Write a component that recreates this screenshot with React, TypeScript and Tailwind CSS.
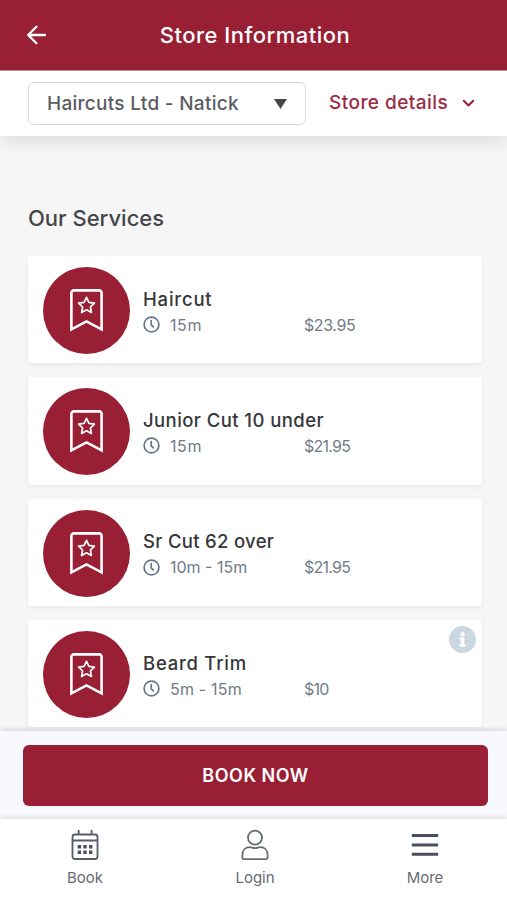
import type { ReactNode } from "react"
import { clsx } from "clsx"

type Service = {
  name: string
  nameClass: string
  duration: string
  durationClass: string
  price: string
  priceClass: string
  hasInfo?: boolean
}

const services: Service[] = [
  {
    name: "Haircut",
    nameClass: "tracking-[0.8px]",
    duration: "15m",
    durationClass: "tracking-[0.6px]",
    price: "$23.95",
    priceClass: "tracking-[-0.4px]",
  },
  {
    name: "Junior Cut 10 under",
    nameClass: "tracking-[0.42px]",
    duration: "15m",
    durationClass: "tracking-[0.6px]",
    price: "$21.95",
    priceClass: "tracking-[-0.75px]",
  },
  {
    name: "Sr Cut 62 over",
    nameClass: "tracking-[0.3px]",
    duration: "10m - 15m",
    durationClass: "",
    price: "$21.95",
    priceClass: "tracking-[-0.75px]",
  },
  {
    name: "Beard Trim",
    nameClass: "tracking-[0.75px]",
    duration: "5m - 15m",
    durationClass: "tracking-[0.2px]",
    price: "$10",
    priceClass: "tracking-[-0.8px]",
    hasInfo: true,
  },
]

const ServiceIcon = () => (
  <div className="flex h-[87px] w-[87px] shrink-0 items-center justify-center rounded-full bg-[#981f34]">
    <svg width="33" height="43" viewBox="0 0 33 43" fill="none" stroke="#fff">
      <path d="M1.400 40.400V3.800a2.400 2.400 0 0 1 2.400-2.400h25.400a2.400 2.400 0 0 1 2.400 2.400v36.600L16.500 32.400z" strokeWidth="2.600" />
      <path
        d="M16.500 8.300l2.400 5.100 5.500.7-4 3.900 1 5.500-4.900-2.700-4.900 2.700 1-5.500-4-3.900 5.500-.7z"
        strokeWidth="1.700"
        strokeLinejoin="round"
      />
    </svg>
  </div>
)

const ServiceCard = ({ service }: { service: Service }) => (
  <article className="relative flex h-[107.300px] shrink-0 items-center rounded-[4px] bg-white pt-[2px] pl-[15px] shadow-[0_2px_5px_rgba(0,0,0,0.05)]">
    <ServiceIcon />
    <div className="ml-[13px] flex-1 pt-[2px]">
      <h3 className={clsx("text-[18.5px] leading-[26px] font-medium whitespace-nowrap text-[#36373a]", service.nameClass)}>
        {service.name}
      </h3>
      <div className="flex h-[26px] items-center text-[16px] text-[#717b87]">
        <svg width="17" height="17" viewBox="0 0 17 17" fill="none" stroke="#66758a" strokeWidth="1.7" strokeLinecap="round">
          <circle cx="8.5" cy="8.5" r="7.4" />
          <path d="M8.2 4.6v4.2l2.100 2" />
        </svg>
        <span className={clsx("ml-[10px] w-[134px] whitespace-nowrap", service.durationClass)}>{service.duration}</span>
        <span className={service.priceClass}>{service.price}</span>
      </div>
    </div>
    {service.hasInfo && (
      <svg className="absolute top-[6px] right-[6.500px]" width="27" height="27" viewBox="0 0 27 27">
        <circle cx="13.5" cy="13.5" r="13.5" fill="#ccd7e0" />
        <circle cx="13.6" cy="8.2" r="2.2" fill="#fff" />
        <path d="M10.6 11.6h4.8v7h1.2v2.2h-6.2v-2.2h1.3v-4.8h-1.1z" fill="#fff" />
      </svg>
    )}
  </article>
)

const NavItem = ({ label, children }: { label: string; children: ReactNode }) => (
  <button className="flex w-[170px] shrink-0 flex-col items-center pt-[9px] text-[15px] leading-[22px] text-[#666b73]">
    <span className="flex h-[33px] items-center">{children}</span>
    <span className="mt-[6px]">{label}</span>
  </button>
)

export default function App() {
  return (
    <div className="flex h-[900px] w-full flex-col overflow-hidden bg-[#f6f6f6] font-['Inter',sans-serif]">
      <header className="flex h-[71px] shrink-0 items-center border-b border-[#c98d98] bg-[#981f34] pl-[26px] text-white">
        <svg width="21" height="20" viewBox="0 0 21 20" fill="none" stroke="#fff" strokeWidth="2.3" strokeLinecap="round" strokeLinejoin="round">
          <path d="M19 10H2.2M10.4 1.8L2.2 10l8.2 8.2" />
        </svg>
        <h1 className="flex-1 pr-[44px] text-center text-[22px] font-medium tracking-[0.48px]">Store Information</h1>
      </header>

      <section className="z-10 flex h-[65px] shrink-0 items-center bg-white pl-[28px] shadow-[0_6px_18px_rgba(0,0,0,0.1)]">
        <button className="flex h-[43px] w-[278px] items-center justify-between rounded-[6px] border-[1.5px] border-[#d5dbdd] pr-[18px] pl-[18px] text-[19px] font-medium tracking-[0.28px] text-[#5a5d61]">
          <span className="pt-[2px] whitespace-nowrap">Haircuts Ltd - Natick</span>
          <svg width="13" height="10" viewBox="0 0 13 10" fill="#45484b">
            <path d="M0 0h13L6.5 10z" />
          </svg>
        </button>
        <button className="ml-[23px] flex items-center text-[19px] font-medium tracking-[0.46px] text-[#9b2b42]">
          <span className="w-[133px] text-left whitespace-nowrap">Store details</span>
          <svg width="13" height="9" viewBox="0 0 13 9" fill="none" stroke="#981f34" strokeWidth="2" strokeLinecap="round" strokeLinejoin="round">
            <path d="M1.8 1.8l4.7 4.7 4.7-4.7" />
          </svg>
        </button>
      </section>

      <main className="flex min-h-0 flex-1 flex-col overflow-hidden pr-[25px] pl-[28px]">
        <h2 className="mt-[67px] mb-[23px] text-[22px] leading-[30px] font-medium text-[#45464a]">Our Services</h2>
        <div className="flex flex-col gap-[14px]">
          {services.map((service) => (
            <ServiceCard key={service.name} service={service} />
          ))}
        </div>
      </main>

      <div className="z-10 h-[88px] shrink-0 bg-[#f8f9fc] pt-[14px] pr-[19px] pl-[23px] shadow-[0_-1px_5px_rgba(0,0,0,0.16)]">
        <button className="h-[60.500px] w-full rounded-[6px] bg-[#981f34] text-[18px] font-semibold tracking-[0.5px] text-white">
          BOOK NOW
        </button>
      </div>

      <nav className="z-20 flex h-[81px] shrink-0 bg-white shadow-[0_-1px_6px_rgba(0,0,0,0.14)]">
        <NavItem label="Book">
          <svg width="28" height="32" viewBox="0 0 28 32" fill="none" stroke="#565d6b" strokeWidth="1.8">
            <rect x="1.5" y="5.5" width="25" height="24.5" rx="2.5" />
            <path d="M1.5 11.5h25M7.7 1v4.5M20.6 1v4.5" />
            <path d="M6.7 17.7h3.4M12.3 17.7h3.4M18 17.7h3.4M6.7 23.3h3.4M12.3 23.3h3.4M18 23.3h3.4" strokeWidth="3.600" stroke="#4b5060" />
          </svg>
        </NavItem>
        <NavItem label="Login">
          <svg width="28" height="32" viewBox="0 0 28 32" fill="none" stroke="#686c73" strokeWidth="1.8" strokeLinejoin="round">
            <circle cx="14" cy="8.6" r="7" />
            <path d="M2.8 30.2c-.9 0-1.4-.5-1.4-1.4v-2.6c0-5 3-8 7.2-8 2 0 2.9 1 5.4 1s3.4-1 5.4-1c4.2 0 7.2 3 7.2 8v2.6c0 .9-.5 1.4-1.4 1.4z" />
          </svg>
        </NavItem>
        <NavItem label="More">
          <svg width="28" height="32" viewBox="0 0 28 32" fill="none" stroke="#4b5060" strokeWidth="3">
            <path d="M.8 6.600h26.400M.8 16h26.400M.8 25.300h26.400" />
          </svg>
        </NavItem>
      </nav>
    </div>
  )
}
